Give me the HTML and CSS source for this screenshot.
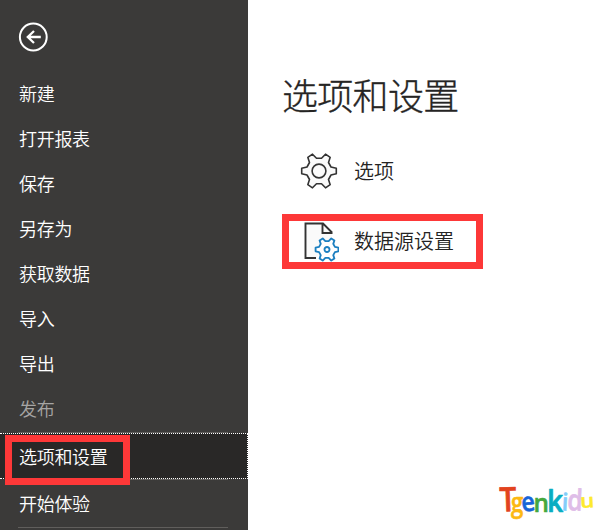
FILE: index.html
```html
<!DOCTYPE html>
<html lang="zh-CN">
<head>
<meta charset="utf-8">
<title>选项和设置</title>
<link rel="stylesheet" href="styles.css">
</head>
<body>
<div class="app">
  <nav class="sidebar">
    <button class="back" aria-label="返回">
      <svg width="30" height="30" viewBox="0 0 30 30" fill="none" stroke="#fff" stroke-width="2">
        <circle cx="15.300" cy="15" r="13.400"/>
        <path d="M22.800 15H9.500M16 9 9.800 15l6.200 6" stroke-width="2.300"/>
      </svg>
    </button>
    <a class="item">新建</a>
    <a class="item">打开报表</a>
    <a class="item">保存</a>
    <a class="item">另存为</a>
    <a class="item">获取数据</a>
    <a class="item">导入</a>
    <a class="item">导出</a>
    <a class="item disabled">发布</a>
    <div class="rule"></div>
    <a class="item selected">选项和设置<span class="mark"></span></a>
    <div class="rule"></div>
    <a class="item last">开始体验</a>
    <div class="rule"></div>
  </nav>
  <main class="content">
    <h1>选项和设置</h1>
    <a class="option">
      <svg class="icon" width="40" height="40" viewBox="-20 -20 40 40" fill="#fafafa" stroke="#333" stroke-width="1.600" stroke-linejoin="round">
        <path d="M12 -4 17.300 -2.800V2.800L12 4 9.500 8.500 11.200 13.700 6.500 16.800 2.500 12.800H-2.500L-6.500 16.800 -11.200 13.700 -9.500 8.500 -12 4 -17.300 2.800V-2.800L-12 -4 -9.500 -8.500 -11.200 -13.700 -6.500 -16.800 -2.500 -12.800H2.500L6.500 -16.800 11.200 -13.700 9.500 -8.500Z"/>
        <circle r="6.900"/>
      </svg>
      <span>选项</span>
    </a>
    <a class="option boxed">
      <svg class="icon" width="40" height="43" viewBox="0 0 40 43" fill="none">
        <path d="M17 38H6.500V3.500H24L33 12.500V19" fill="#fafafa"/>
        <path d="M17 38H6.500V3.500H24L33 12.500M23.500 3.500V13H33.500" stroke="#333" stroke-width="1.900"/>
        <g transform="translate(28 29.500) scale(.66)" fill="#fff" stroke="#1c7fc0" stroke-width="2.800" stroke-linejoin="round">
          <path d="M12 -4 17.300 -2.800V2.800L12 4 9.500 8.500 11.200 13.700 6.500 16.800 2.500 12.800H-2.500L-6.500 16.800 -11.200 13.700 -9.500 8.500 -12 4 -17.300 2.800V-2.800L-12 -4 -9.500 -8.500 -11.200 -13.700 -6.500 -16.800 -2.500 -12.800H2.500L6.500 -16.800 11.200 -13.700 9.500 -8.500Z"/>
          <circle r="3.800"/>
        </g>
      </svg>
      <span>数据源设置</span>
    </a>
    <svg class="logo" width="104" height="55" viewBox="0 -10 104 55">
      <text class="t" transform="translate(5 31.500) rotate(-2) scale(1.100 1.240)">T</text>
      <text class="g" transform="translate(16 32) scale(.82 1)">g</text>
      <text class="e" transform="translate(27.500 32) rotate(-8) scale(.87 .98)">e</text>
      <text class="n" transform="translate(38.500 31.500) scale(.9 .92)">n</text>
      <text class="k" transform="translate(52 31.500) scale(1.050 1.150)">k</text>
      <text class="i" transform="translate(66.500 30.500) rotate(3) scale(.85 .9)">i</text>
      <text class="d" transform="translate(72 30) rotate(3) scale(.9 1.080)">d</text>
      <text class="u" transform="translate(85.500 28) rotate(-3) scale(.82 .72)">u</text>
    </svg>
  </main>
</div>
</body>
</html>
```
FILE: styles.css
```css
* { box-sizing: border-box; }
body {
  margin: 0;
  font-family: "Noto Sans CJK SC", sans-serif;
  background: #fff;
}
.app {
  display: flex;
  height: 530px;
  overflow: hidden;
}
.sidebar {
  display: flex;
  flex-direction: column;
  width: 248px;
  background: #3b3a39;
  color: #fff;
}
.back {
  display: flex;
  width: 30px;
  height: 30px;
  margin: 22px 0 20px 18px;
  padding: 0;
  border: 0;
  background: none;
}
.item {
  flex: none;
  height: 45px;
  padding-left: 19px;
  font-size: 18px;
  font-weight: 350;
  letter-spacing: -0.3px;
  line-height: 42px;
}
.disabled { color: #a6a5a4; }
.rule {
  flex: none;
  height: 1px;
  margin: 0 20px 0 18px;
  background: #605e5c;
}
.selected {
  position: relative;
  height: 46px;
  border: 1px dotted #fff;
  border-left: 0;
  background: #292827;
  line-height: 44px;
}
.mark {
  position: absolute;
  left: 5px;
  top: 1px;
  width: 125px;
  height: 50px;
  border: 7px solid #fd3838;
}
.last {
  height: 47px;
  line-height: 46px;
}
.content {
  display: flex;
  flex: 1;
  flex-direction: column;
  align-items: flex-start;
  padding: 68px 0 0 34px;
  color: #252423;
}
h1 {
  margin: 0;
  font-size: 36px;
  font-weight: 300;
  letter-spacing: -0.7px;
  line-height: 52px;
  -webkit-text-stroke: .35px #252423;
}
.option {
  display: flex;
  align-items: center;
  height: 55px;
  margin-top: 23px;
  padding-left: 17px;
  font-size: 20px;
  font-weight: 350;
  line-height: 40px;
}
.option span { margin-left: 15px; }
.boxed {
  width: 201px;
  margin-top: 16px;
  padding-left: 10px;
  border: 7px solid #fd3838;
}
.boxed span { padding-bottom: 2px; }
.logo {
  margin: auto 5px 5px auto;
  font-family: "Open Sans", sans-serif;
  font-size: 27px;
  font-weight: 600;
  stroke-width: .6;
  stroke-linejoin: round;
}
.t { fill: #e2431e; stroke: #e2431e; }
.g { fill: #fcb813; stroke: #fcb813; }
.e { fill: #1764d8; stroke: #1764d8; }
.n { fill: #45a83c; stroke: #45a83c; }
.k { fill: #08adc2; stroke: #08adc2; }
.i { fill: #83cdfa; stroke: #83cdfa; }
.d { fill: #dfbde8; stroke: #dfbde8; }
.u { fill: #fdea2e; stroke: #fdea2e; }
```
